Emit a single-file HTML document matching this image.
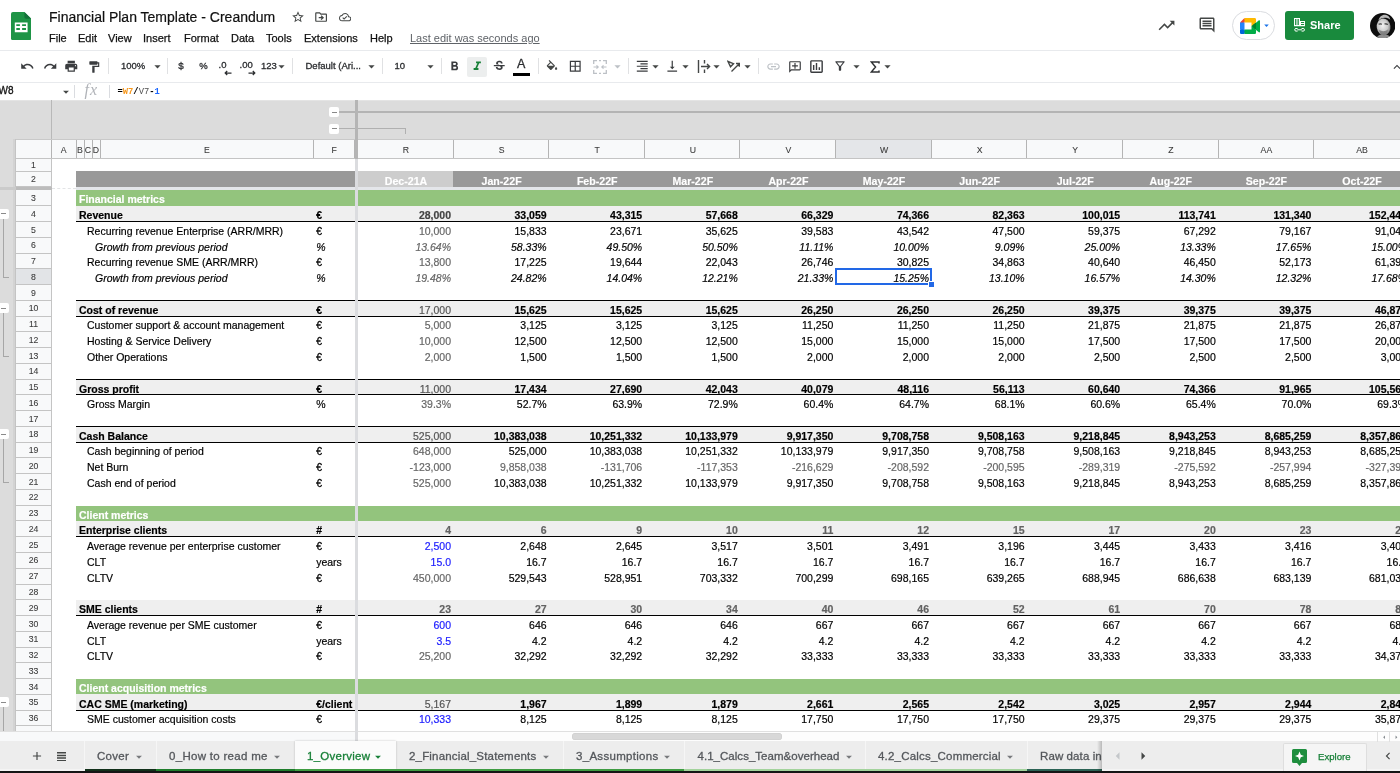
<!DOCTYPE html>
<html lang="en">
<head>
<meta charset="utf-8">
<title>Financial Plan Template - Creandum</title>
<style>
html,body{margin:0;padding:0;background:#fff;}
body{width:1400px;height:773px;overflow:hidden;font-family:"Liberation Sans",sans-serif;color:#000;}
#app{position:relative;width:1400px;height:773px;overflow:hidden;background:#fff;will-change:transform;}
#app div,#app span,#app svg{position:absolute;}
.t{white-space:pre;}
/* header */
.title{left:49px;top:9px;font-size:14px;line-height:16px;color:#111;-webkit-text-stroke:.2px #111;}
.menu{top:31px;font-size:11px;line-height:14px;color:#111;-webkit-text-stroke:.25px #111;}
.lastedit{top:31px;left:410px;font-size:11px;line-height:14px;color:#5f6368;text-decoration:underline;}
/* toolbar */
.tbtxt{top:59px;font-size:9.5px;line-height:14px;color:#2b2d30;-webkit-text-stroke:.3px #2b2d30;}
.sep{width:1px;background:#e0e1e3;top:58px;height:16px;}
.ico{fill:#444746;}
/* grid */
.hc{color:#3a3a3a;font-size:8.7px;text-align:center;-webkit-text-stroke:.08px;}
.c{font-size:10.5px;line-height:15.76px;height:15.76px;white-space:pre;overflow:visible;-webkit-text-stroke:.18px;}
.r{text-align:right;}
.b{font-weight:bold;}
.i{font-style:italic;}
.g{color:#666;}
.dg{color:#434343;}
.g2{color:#555;}
.g3{color:#626262;}
.bl{color:#1a1aff;}
.w{color:#fff;}
.eu{-webkit-text-stroke:.28px;}
.tab{top:749px;font-size:11.5px;letter-spacing:.3px;line-height:14px;color:#5f6368;white-space:pre;-webkit-text-stroke:.3px;}
</style>
</head>
<body>
<div id="app">

<!-- header -->
<svg style="left:10.900px;top:11.500px" width="20.400" height="28.200" viewBox="0 0 20.400 28.200"><path fill="#1e9446" d="M2 0h11.400l7 6.800V26.200a2 2 0 0 1-2 2H2a2 2 0 0 1-2-2V2a2 2 0 0 1 2-2z"/><path fill="#14713a" d="M13.400 0l7 6.800h-5.200a1.800 1.800 0 0 1-1.800-1.800z"/><path fill="#fff" fill-rule="evenodd" d="M3.800 10.500h12.800v9.700H3.800zM5.300 12.200v1.900h3.600v-1.900zM11.100 12.200v1.900H15v-1.900zM5.300 16.100v2h3.600v-2zM11.100 16.100v2H15v-2z"/></svg>
<div class="title t">Financial Plan Template - Creandum</div>
<svg style="left:290.7px;top:10.0px" width="14" height="14" viewBox="0 0 24 24"><path fill="#444746" d="M22 9.24l-7.19-.62L12 2 9.19 8.63 2 9.24l5.46 4.73L5.82 21 12 17.27 18.18 21l-1.63-7.03L22 9.24zM12 15.4l-3.76 2.27 1-4.28-3.32-2.88 4.38-.38L12 6.1l1.71 4.04 4.38.38-3.32 2.88 1 4.28L12 15.4z" /></svg>
<svg style="left:313.9px;top:9.9px" width="14.2" height="14.2" viewBox="0 0 24 24"><path fill="#444746" d="M20 6h-8l-2-2H4c-1.1 0-2 .9-2 2v12c0 1.1.9 2 2 2h16c1.1 0 2-.9 2-2V8c0-1.1-.9-2-2-2zm0 12H4V6h5.17l2 2H20v10zm-7.16-4H8v-2h4.84l-1.59-1.59L12.66 9 17 13l-4.34 4-1.41-1.41L12.84 14z" /></svg>
<svg style="left:338.85px;top:10.95px" width="12.3" height="12.3" viewBox="0 0 24 24"><path fill="#444746" d="M19.35 10.04C18.67 6.59 15.64 4 12 4 9.11 4 6.6 5.64 5.35 8.04 2.34 8.36 0 10.91 0 14c0 3.31 2.69 6 6 6h13c2.76 0 5-2.24 5-5 0-2.64-2.05-4.78-4.65-4.96zM19 18H6c-2.21 0-4-1.79-4-4s1.79-4 4-4h.71C7.37 7.69 9.48 6 12 6c3.04 0 5.5 2.46 5.5 5.5v.5H19c1.66 0 3 1.34 3 3s-1.34 3-3 3zm-9-3.82l-2.09-2.09L6.5 13.5 10 17l6.01-6.01-1.41-1.41z" /></svg>
<div class="menu t" style="left:49px">File</div>
<div class="menu t" style="left:78px">Edit</div>
<div class="menu t" style="left:108px">View</div>
<div class="menu t" style="left:143px">Insert</div>
<div class="menu t" style="left:184px">Format</div>
<div class="menu t" style="left:231px">Data</div>
<div class="menu t" style="left:266px">Tools</div>
<div class="menu t" style="left:304px">Extensions</div>
<div class="menu t" style="left:370px">Help</div>
<div class="lastedit t">Last edit was seconds ago</div>
<svg style="left:1156.9px;top:15.5px" width="19" height="19" viewBox="0 0 24 24"><path fill="#444746" d="M16 6l2.29 2.29-4.88 4.88-4-4L2 16.59 3.41 18l6-6 4 4 6.3-6.29L22 12V6z" /></svg>
<svg style="left:1197.6px;top:16.0px" width="18" height="18" viewBox="0 0 24 24"><path fill="#444746" d="M21.99 4c0-1.1-.89-2-1.99-2H4c-1.1 0-2 .9-2 2v12c0 1.1.9 2 2 2h14l4 4-.01-18zM20 4v13.17L18.83 16H4V4h16zM6 12h12v2H6zm0-3h12v2H6zm0-3h12v2H6z" /></svg>
<div style="left:1232px;top:11px;width:41px;height:27px;border:1px solid #dadce0;border-radius:15px;background:#fff"></div>
<svg style="left:1240px;top:17.5px" width="20" height="16" viewBox="0 0 20 16"><path fill="#00832d" d="M11.500 8l1.900 2.200 2.600 1.700.450-3.900-.450-3.800-2.650 1.500z"/><path fill="#0066da" d="M0 11.500v3.200C0 15.400.600 16 1.300 16h3.200l.700-2.400-.700-2.100-2.200-.700z"/><path fill="#e94235" d="M4.500 0L0 4.500l2.300.700 2.200-.700.650-2.100z"/><path fill="#2684fc" d="M0 4.500h4.500v7H0z"/><path fill="#00ac47" d="M18.900 2.300L16 4.700v7.200l2.900 2.400c.450.340 1.100.030 1.100-.540V2.800c0-.570-.660-.880-1.100-.500zM11.500 8v3.500h-7V16h10.200c.700 0 1.300-.600 1.300-1.300v-2.800z"/><path fill="#ffba00" d="M14.700 0H4.500v4.500h7V8L16 4.200V1.300C16 .600 15.400 0 14.700 0z"/></svg>
<svg style="left:1260.5px;top:19.5px" width="11" height="11" viewBox="0 0 24 24"><path fill="#1a73e8" d="M7 10l5 5 5-5z" /></svg>
<div style="left:1284.500px;top:11px;width:69.500px;height:28.500px;border-radius:3px;background:#198a3d"></div>
<svg style="left:1294px;top:18.200px" width="11.200" height="13.600" viewBox="0 0 11.200 13.600"><path fill="#fff" fill-rule="evenodd" d="M0 0h6v3h5.200v5.200H0zM1.100 1.100v6h1.300v-6zM3.500 1.100v6h1.300v-6zM7 4.100v1h3.100v-1zM7 6.100v1h3.100v-1z"/><path fill="none" stroke="#fff" stroke-width="1" d="M3.600 10.500H2a1.300 1.300 0 0 0 0 2.600h1.600M3.300 11.800h4.600M7.600 10.500h1.600a1.300 1.300 0 0 1 0 2.600H7.600"/></svg>
<div class="t" style="left:1310px;top:18px;font-size:11px;line-height:14px;font-weight:bold;color:#fff">Share</div>
<svg style="left:1369.500px;top:12.700px" width="25.400" height="25.400" viewBox="0 0 25.400 25.400"><defs><clipPath id="av"><circle cx="12.700" cy="12.700" r="12.700"/></clipPath><radialGradient id="fg" cx=".45" cy=".42" r=".62"><stop offset="0" stop-color="#f2f2f2"/><stop offset=".6" stop-color="#c9c9c9"/><stop offset="1" stop-color="#6e6e6e"/></radialGradient></defs><circle cx="12.700" cy="12.700" r="12.700" fill="#0d0d0d"/><g clip-path="url(#av)"><path d="M6.500 25.400c.6-2.600 3-4.200 7-4.200s6.600 1.600 7.400 4.200z" fill="#8d8d8d"/><ellipse cx="13.600" cy="13.900" rx="6.900" ry="8.400" fill="url(#fg)" transform="rotate(-8 13.600 13.900)"/><path d="M8.300 7.800c1-4 3.600-6.300 6.900-6.100 2.800.2 4.600 2.100 5.100 5-1.700-1.400-3.400-1.900-5.600-1.900-2.500 0-4.600.9-6.400 3z" fill="#b9b9b9"/><path d="M8.600 11.300c1.100-.5 2.300-.5 3.300-.1M14.500 11.100c1.100-.4 2.300-.3 3.400.3" stroke="#3a3a3a" stroke-width="1.100" fill="none"/><path d="M9 16.600c1.300 1.200 2.700 1.600 4.300 1.600s3.200-.4 4.700-1.700c-.3 3.600-2 5.800-4.400 5.800S9.500 20.200 9 16.600z" fill="#7a7a7a" opacity=".85"/></g></svg>
<!-- toolbar -->
<div style="left:0;top:49.500px;width:1400px;height:1px;background:#e8eaed"></div>
<div style="left:0;top:82px;width:1400px;height:1px;background:#e8eaed"></div>
<svg style="left:20.05px;top:59.05px" width="14.5" height="14.5" viewBox="0 0 24 24"><path fill="#3a3c3f" d="M12.5 8c-2.65 0-5.05.99-6.9 2.6L2 7v9h9l-3.62-3.62c1.39-1.16 3.16-1.88 5.12-1.88 3.54 0 6.55 2.31 7.6 5.5l2.37-.78C21.08 11.03 17.15 8 12.5 8z" /></svg>
<svg style="left:42.75px;top:59.05px" width="14.5" height="14.5" viewBox="0 0 24 24"><path fill="#3a3c3f" d="M18.4 10.6C16.55 8.99 14.15 8 11.5 8c-4.65 0-8.58 3.03-9.96 7.22L3.9 16c1.05-3.19 4.05-5.5 7.6-5.5 1.95 0 3.73.72 5.12 1.88L13 16h9V7l-3.6 3.6z" /></svg>
<svg style="left:64.45px;top:59.05px" width="14.5" height="14.5" viewBox="0 0 24 24"><path fill="#3a3c3f" d="M19 8H5c-1.66 0-3 1.34-3 3v6h4v4h12v-4h4v-6c0-1.66-1.34-3-3-3zm-3 11H8v-5h8v5zm3-7c-.55 0-1-.45-1-1s.45-1 1-1 1 .45 1 1-.45 1-1 1zm-1-9H6v4h12V3z" /></svg>
<svg style="left:87.3px;top:59.6px" width="14" height="14" viewBox="0 0 24 24"><path fill="#3a3c3f" d="M18 4V3c0-.55-.45-1-1-1H5c-.55 0-1 .45-1 1v4c0 .55.45 1 1 1h12c.55 0 1-.45 1-1V6h1v4H9v11c0 .55.45 1 1 1h2c.55 0 1-.45 1-1v-9h8V4h-3z" /></svg>
<div class="sep" style="left:108px"></div>
<div class="sep" style="left:166.5px"></div>
<div class="sep" style="left:291.5px"></div>
<div class="sep" style="left:381.5px"></div>
<div class="sep" style="left:440.5px"></div>
<div class="sep" style="left:537.5px"></div>
<div class="sep" style="left:627.5px"></div>
<div class="sep" style="left:758px"></div>
<div class="tbtxt t" style="left:121px">100%</div>
<svg style="left:149.5px;top:59.0px" width="15" height="15" viewBox="0 0 24 24"><path fill="#444746" d="M7 10l5 5 5-5z" /></svg>
<div class="tbtxt t" style="left:178.200px;font-size:9.800px">$</div>
<div class="tbtxt t" style="left:199.300px;font-size:9.500px">%</div>
<div class="tbtxt t" style="left:218.500px;top:57.500px">.0</div>
<svg style="left:223.500px;top:69.500px" width="8" height="6" viewBox="0 0 8 6"><path d="M7.500 3H1.500M3.200 1L1.200 3l2 2" fill="none" stroke="#2b2d30" stroke-width="1.250"/></svg>
<div class="tbtxt t" style="left:239.500px;top:57.500px">.00</div>
<svg style="left:247.500px;top:69.500px" width="8" height="6" viewBox="0 0 8 6"><path d="M.500 3h6M4.800 1l2 2-2 2" fill="none" stroke="#2b2d30" stroke-width="1.250"/></svg>
<div class="tbtxt t" style="left:261px">123</div>
<svg style="left:274.0px;top:59.0px" width="15" height="15" viewBox="0 0 24 24"><path fill="#444746" d="M7 10l5 5 5-5z" /></svg>
<div class="tbtxt t" style="left:305.500px">Default (Ari...</div>
<svg style="left:363.5px;top:59.0px" width="15" height="15" viewBox="0 0 24 24"><path fill="#444746" d="M7 10l5 5 5-5z" /></svg>
<div class="tbtxt t" style="left:394.500px">10</div>
<svg style="left:423.0px;top:59.0px" width="15" height="15" viewBox="0 0 24 24"><path fill="#444746" d="M7 10l5 5 5-5z" /></svg>
<svg style="left:447.0px;top:58.8px" width="15" height="15" viewBox="0 0 24 24"><path fill="#3a3c3f" d="M15.6 10.79c.97-.67 1.65-1.77 1.65-2.79 0-2.26-1.75-4-4-4H7v14h7.04c2.09 0 3.71-1.7 3.71-3.79 0-1.52-.86-2.82-2.15-3.42zM10 6.5h3c.83 0 1.5.67 1.5 1.5s-.67 1.5-1.5 1.5h-3v-3zm3.5 9H10v-3h3.5c.83 0 1.5.67 1.5 1.5s-.67 1.5-1.5 1.5z" /></svg>
<div style="left:467px;top:57px;width:19.500px;height:19.500px;background:#eceeee;border-radius:2px"></div>
<svg style="left:469.55px;top:59.05px" width="14.5" height="14.5" viewBox="0 0 24 24"><path fill="#188038" d="M10 4v3h2.21l-3.42 8H6v3h8v-3h-2.21l3.42-8H18V4z" /></svg>
<svg style="left:491.75px;top:59.05px" width="14.5" height="14.5" viewBox="0 0 24 24"><path fill="#3a3c3f" d="M7.24 8.75c-.26-.48-.39-1.03-.39-1.67 0-.61.13-1.16.4-1.67.26-.5.63-.93 1.11-1.29.48-.35 1.05-.63 1.7-.83.66-.19 1.39-.29 2.18-.29.81 0 1.54.11 2.21.34.66.22 1.23.54 1.69.94.47.4.83.88 1.08 1.43.25.55.38 1.15.38 1.81h-3.01c0-.31-.05-.59-.15-.85-.09-.27-.24-.49-.44-.68-.2-.19-.45-.33-.75-.44-.3-.1-.66-.16-1.06-.16-.39 0-.74.04-1.03.13-.29.09-.53.21-.72.36-.19.16-.34.34-.44.55-.1.21-.15.43-.15.66 0 .48.25.88.74 1.21.38.25.77.48 1.41.7H7.39c-.05-.08-.11-.17-.15-.25zM21 12v-2H3v2h9.62c.18.07.4.14.55.2.37.17.66.34.87.51.21.17.35.36.43.57.07.2.11.43.11.69 0 .23-.05.45-.14.66-.09.2-.23.38-.42.53-.19.15-.42.26-.71.35-.29.08-.63.13-1.01.13-.43 0-.83-.04-1.18-.13s-.66-.23-.91-.42c-.25-.19-.45-.44-.59-.75-.14-.31-.25-.76-.25-1.21H6.4c0 .55.08 1.13.24 1.58.16.45.37.85.65 1.21.28.35.6.66.98.92.37.26.78.48 1.22.65.44.17.9.3 1.38.39.48.08.96.13 1.44.13.8 0 1.53-.09 2.18-.28s1.21-.45 1.67-.79c.46-.34.82-.77 1.07-1.27s.38-1.07.38-1.71c0-.6-.1-1.14-.31-1.61-.05-.11-.11-.23-.17-.33H21z" /></svg>
<div class="t" style="left:517px;top:57.300px;font-size:12.500px;line-height:15px;color:#2b2d30;-webkit-text-stroke:.3px #2b2d30">A</div>
<div style="left:513.200px;top:73px;width:17px;height:2.600px;background:#000"></div>
<svg style="left:544.5px;top:59.8px" width="14" height="14" viewBox="0 0 24 24"><path fill="#444746" d="M16.56 8.94L7.62 0 6.21 1.41l2.38 2.38-5.15 5.15c-.59.59-.59 1.54 0 2.12l5.5 5.5c.29.29.68.44 1.06.44s.77-.15 1.06-.44l5.5-5.5c.59-.58.59-1.53 0-2.12zM5.21 10L10 5.21 14.79 10H5.21zM19 11.5s-2 2.17-2 3.5c0 1.1.9 2 2 2s2-.9 2-2c0-1.33-2-3.5-2-3.5z" /></svg>
<svg style="left:567.95px;top:59.05px" width="14.5" height="14.5" viewBox="0 0 24 24"><path fill="#3a3c3f" d="M3 3v18h18V3H3zm8 16H5v-6h6v6zm0-8H5V5h6v6zm8 8h-6v-6h6v6zm0-8h-6V5h6v6z" /></svg>
<svg style="left:593px;top:59.500px" width="14" height="14" viewBox="0 0 14 14"><path fill="none" stroke="#bdc1c6" stroke-width="1.300" d="M.700 4V.700H4M6 .700h2M10 .700h3.300V4M13.300 10v3.300H10M8 13.300H6M4 13.300H.700V10"/><path fill="none" stroke="#bdc1c6" stroke-width="1.200" d="M.500 7h4.500M3.500 5.300L5.200 7 3.500 8.700M13.500 7H9M10.500 5.300L8.800 7l1.700 1.700"/></svg>
<svg style="left:609.5px;top:59.0px" width="15" height="15" viewBox="0 0 24 24"><path fill="#bdc1c6" d="M7 10l5 5 5-5z" /></svg>
<svg style="left:634.75px;top:59.05px" width="14.5" height="14.5" viewBox="0 0 24 24"><path fill="#3a3c3f" d="M3 21h18v-2H3v2zm6-4h12v-2H9v2zm-6-4h18v-2H3v2zm6-4h12V7H9v2zM3 3v2h18V3H3z" /></svg>
<svg style="left:647.5px;top:59.0px" width="15" height="15" viewBox="0 0 24 24"><path fill="#444746" d="M7 10l5 5 5-5z" /></svg>
<svg style="left:665.25px;top:59.05px" width="14.5" height="14.5" viewBox="0 0 24 24"><path fill="#3a3c3f" d="M16 13h-3V3h-2v10H8l4 4 4-4zM4 19v2h16v-2H4z" /></svg>
<svg style="left:678.2px;top:59.0px" width="15" height="15" viewBox="0 0 24 24"><path fill="#444746" d="M7 10l5 5 5-5z" /></svg>
<svg style="left:696.500px;top:59px" width="14" height="15" viewBox="0 0 14 15"><path fill="none" stroke="#444746" stroke-width="1.400" d="M1.500 1v13M7.500 1v3.500M7.500 10.500V14M4 7.500h8M10 5l2.600 2.500L10 10"/></svg>
<svg style="left:708.5px;top:59.0px" width="15" height="15" viewBox="0 0 24 24"><path fill="#444746" d="M7 10l5 5 5-5z" /></svg>
<svg style="left:727px;top:59px" width="14" height="15" viewBox="0 0 14 15"><path fill="none" stroke="#444746" stroke-width="1.400" d="M1 2.500l5.500 2.200-3 3zM4.500 12.500L12 5M9 4.500h3.300v3.300"/></svg>
<svg style="left:740.0px;top:59.0px" width="15" height="15" viewBox="0 0 24 24"><path fill="#444746" d="M7 10l5 5 5-5z" /></svg>
<svg style="left:765.5px;top:58.8px" width="15" height="15" viewBox="0 0 24 24"><path fill="#bdc1c6" d="M3.9 12c0-1.71 1.39-3.1 3.1-3.1h4V7H7c-2.76 0-5 2.24-5 5s2.24 5 5 5h4v-1.9H7c-1.71 0-3.1-1.39-3.1-3.1zM8 13h8v-2H8v2zm9-6h-4v1.9h4c1.71 0 3.1 1.39 3.1 3.1s-1.39 3.1-3.1 3.1h-4V17h4c2.76 0 5-2.24 5-5s-2.24-5-5-5z" /></svg>
<svg style="left:787.6px;top:59.7px" width="14" height="14" viewBox="0 0 24 24"><path fill="#3a3c3f" d="M2 4c0-1.1.9-2 2-2h16c1.1 0 2 .9 2 2v12c0 1.1-.9 2-2 2H6l-4 4V4zm2 13.17L5.17 16H20V4H4v13.17zM11 5h2v4h4v2h-4v4h-2v-4H7V9h4z" /></svg>
<svg style="left:808.3px;top:58.0px" width="17" height="17" viewBox="0 0 24 24"><path fill="#3a3c3f" d="M9 17H7v-7h2v7zm4 0h-2V7h2v10zm4 0h-2v-4h2v4zm2 2H5V5h14v14zm0-16H5c-1.1 0-2 .9-2 2v14c0 1.1.9 2 2 2h14c1.1 0 2-.9 2-2V5c0-1.1-.9-2-2-2z" /></svg>
<svg style="left:832.5px;top:59.3px" width="14" height="14" viewBox="0 0 24 24"><path fill="#3a3c3f" d="M7 6h10l-5.01 6.3L7 6zm-2.75-.39C6.27 8.2 10 13 10 13v6c0 .55.45 1 1 1h2c.55 0 1-.45 1-1v-6s3.72-4.8 5.74-7.39c.51-.66.04-1.61-.79-1.61H5.04c-.83 0-1.3.95-.79 1.61z" /></svg>
<svg style="left:849.2px;top:59.0px" width="15" height="15" viewBox="0 0 24 24"><path fill="#444746" d="M7 10l5 5 5-5z" /></svg>
<svg style="left:869.500px;top:60.500px" width="10" height="12" viewBox="0 0 10 12"><path fill="none" stroke="#2f3133" stroke-width="1.500" d="M9 2.600V1H1.300l4.200 5-4.200 5H9V9.400"/></svg>
<svg style="left:880.0px;top:59.0px" width="15" height="15" viewBox="0 0 24 24"><path fill="#444746" d="M7 10l5 5 5-5z" /></svg>
<svg style="left:1389.8px;top:60.0px" width="14" height="14" viewBox="0 0 24 24"><path fill="#3a3c3f" d="M12 8l-6 6 1.41 1.41L12 10.83l4.59 4.58L18 14z" /></svg>
<!-- formula bar -->
<div class="t" style="left:-1.500px;top:84px;font-size:10px;line-height:14px;color:#111;-webkit-text-stroke:.3px #111">W8</div>
<svg style="left:59.0px;top:85.0px" width="14" height="14" viewBox="0 0 24 24"><path fill="#444746" d="M7 10l5 5 5-5z" /></svg>
<div style="left:74px;top:85px;width:1px;height:13px;background:#dadce0"></div>
<div class="t" style="left:84.500px;top:82.100px;font-family:'Liberation Serif',serif;font-style:italic;font-size:16px;letter-spacing:1px;line-height:16px;color:#b0b3b8">fx</div>
<div style="left:108.500px;top:85px;width:1px;height:13px;background:#dadce0"></div>
<div class="t" style="left:117.500px;top:86.400px;font-family:'Liberation Mono',monospace;font-size:8.800px;font-weight:bold;line-height:13px;color:#000">=<span style="position:static;color:#f7981d">W7</span>/<span style="position:static;color:#505050;font-weight:normal">V7</span>-<span style="position:static;color:#1a66ff">1</span></div>
<!-- grid -->
<div style="left:0;top:100.300px;width:1400px;height:39.400px;background:#dcdcdc"></div>
<div style="left:0;top:100.300px;width:15.500px;height:631.1px;background:#dcdcdc"></div>
<div style="left:0;top:100px;width:1400px;height:1px;background:#e4e4e4"></div>
<div style="left:51px;top:100.300px;width:1px;height:39.400px;background:#b8b8b8"></div>
<div style="left:339px;top:111.300px;width:1061px;height:1.600px;background:#b4b4b4"></div>
<div style="left:339px;top:128px;width:67px;height:1px;background:#b0b0b0"></div>
<div style="left:405px;top:128px;width:1px;height:6px;background:#b0b0b0"></div>
<div style="left:329px;top:107.2px;width:10px;height:10px;background:#fff;border-radius:2px"></div>
<div style="left:331.500px;top:111.7px;width:5px;height:1px;background:#888"></div>
<div style="left:329px;top:123.8px;width:10px;height:10px;background:#fff;border-radius:2px"></div>
<div style="left:331.500px;top:128.3px;width:5px;height:1px;background:#888"></div>
<div style="left:15.500px;top:139.500px;width:1385px;height:19.200px;background:#f8f9fa"></div>
<div style="left:15.500px;top:139px;width:1385px;height:1px;background:#c9c9c9"></div>
<div style="left:15.500px;top:158px;width:1385px;height:1px;background:#c4c4c4"></div>
<div style="left:15px;top:139px;width:1px;height:20px;background:#c4c4c4"></div>
<div style="left:51px;top:140px;width:1px;height:18px;background:#b4b4b4"></div>
<div style="left:76px;top:140px;width:1px;height:18px;background:#b4b4b4"></div>
<div class="hc" style="left:51.50px;top:141.300px;width:24.50px;height:17px;line-height:19px">A</div>
<div style="left:84px;top:140px;width:1px;height:18px;background:#b4b4b4"></div>
<div class="hc" style="left:76.00px;top:141.300px;width:8.00px;height:17px;line-height:19px">B</div>
<div style="left:92px;top:140px;width:1px;height:18px;background:#b4b4b4"></div>
<div class="hc" style="left:84.00px;top:141.300px;width:8.00px;height:17px;line-height:19px">C</div>
<div style="left:100px;top:140px;width:1px;height:18px;background:#b4b4b4"></div>
<div class="hc" style="left:92.00px;top:141.300px;width:8.00px;height:17px;line-height:19px">D</div>
<div style="left:313px;top:140px;width:1px;height:18px;background:#b4b4b4"></div>
<div class="hc" style="left:100.00px;top:141.300px;width:213.70px;height:17px;line-height:19px">E</div>
<div style="left:354px;top:140px;width:1px;height:18px;background:#b4b4b4"></div>
<div class="hc" style="left:313.70px;top:141.300px;width:41.00px;height:17px;line-height:19px">F</div>
<div style="left:453px;top:140px;width:1px;height:18px;background:#b4b4b4"></div>
<div class="hc" style="left:358.20px;top:141.300px;width:95.60px;height:17px;line-height:19px">R</div>
<div style="left:548px;top:140px;width:1px;height:18px;background:#b4b4b4"></div>
<div class="hc" style="left:453.80px;top:141.300px;width:95.60px;height:17px;line-height:19px">S</div>
<div style="left:644px;top:140px;width:1px;height:18px;background:#b4b4b4"></div>
<div class="hc" style="left:549.40px;top:141.300px;width:95.60px;height:17px;line-height:19px">T</div>
<div style="left:739px;top:140px;width:1px;height:18px;background:#b4b4b4"></div>
<div class="hc" style="left:645.00px;top:141.300px;width:95.60px;height:17px;line-height:19px">U</div>
<div style="left:835px;top:140px;width:1px;height:18px;background:#b4b4b4"></div>
<div class="hc" style="left:740.60px;top:141.300px;width:95.60px;height:17px;line-height:19px">V</div>
<div style="left:836.20px;top:140px;width:95.60px;height:18px;background:#e4e6e9"></div>
<div style="left:835px;top:140px;width:1px;height:18px;background:#b4b4b4"></div>
<div style="left:931px;top:140px;width:1px;height:18px;background:#b4b4b4"></div>
<div class="hc" style="left:836.20px;top:141.300px;width:95.60px;height:17px;line-height:19px">W</div>
<div style="left:1026px;top:140px;width:1px;height:18px;background:#b4b4b4"></div>
<div class="hc" style="left:931.80px;top:141.300px;width:95.60px;height:17px;line-height:19px">X</div>
<div style="left:1122px;top:140px;width:1px;height:18px;background:#b4b4b4"></div>
<div class="hc" style="left:1027.40px;top:141.300px;width:95.60px;height:17px;line-height:19px">Y</div>
<div style="left:1218px;top:140px;width:1px;height:18px;background:#b4b4b4"></div>
<div class="hc" style="left:1123.00px;top:141.300px;width:95.60px;height:17px;line-height:19px">Z</div>
<div style="left:1313px;top:140px;width:1px;height:18px;background:#b4b4b4"></div>
<div class="hc" style="left:1218.60px;top:141.300px;width:95.60px;height:17px;line-height:19px">AA</div>
<div style="left:1409px;top:140px;width:1px;height:18px;background:#b4b4b4"></div>
<div class="hc" style="left:1314.20px;top:141.300px;width:95.60px;height:17px;line-height:19px">AB</div>
<div style="left:15.500px;top:158.700px;width:36px;height:572.7px;background:#f8f9fa"></div>
<div style="left:13px;top:139px;width:2px;height:592.4px;background:#d3d3d3"></div>
<div style="left:15px;top:158.700px;width:1px;height:572.7px;background:#c4c4c4"></div>
<div style="left:51px;top:158.700px;width:1px;height:572.7px;background:#c4c4c4"></div>
<div style="left:16px;top:171px;width:35px;height:1px;background:#c4c4c4"></div>
<div class="hc" style="left:16px;top:158.70px;width:35px;height:12.40px;line-height:13.00px;overflow:hidden">1</div>
<div style="left:16px;top:186px;width:35px;height:1px;background:#c4c4c4"></div>
<div class="hc" style="left:16px;top:171.10px;width:35px;height:15.50px;line-height:16.10px;overflow:hidden">2</div>
<div style="left:16px;top:205px;width:35px;height:1px;background:#c4c4c4"></div>
<div class="hc" style="left:16px;top:190.00px;width:35px;height:15.76px;line-height:16.36px;overflow:hidden">3</div>
<div style="left:16px;top:221px;width:35px;height:1px;background:#c4c4c4"></div>
<div class="hc" style="left:16px;top:205.76px;width:35px;height:15.76px;line-height:16.36px;overflow:hidden">4</div>
<div style="left:16px;top:237px;width:35px;height:1px;background:#c4c4c4"></div>
<div class="hc" style="left:16px;top:221.52px;width:35px;height:15.76px;line-height:16.36px;overflow:hidden">5</div>
<div style="left:16px;top:253px;width:35px;height:1px;background:#c4c4c4"></div>
<div class="hc" style="left:16px;top:237.28px;width:35px;height:15.76px;line-height:16.36px;overflow:hidden">6</div>
<div style="left:16px;top:268px;width:35px;height:1px;background:#c4c4c4"></div>
<div class="hc" style="left:16px;top:253.04px;width:35px;height:15.76px;line-height:16.36px;overflow:hidden">7</div>
<div style="left:16px;top:268.80px;width:35px;height:15.76px;background:#e2e4e7"></div>
<div style="left:16px;top:284px;width:35px;height:1px;background:#c4c4c4"></div>
<div class="hc" style="left:16px;top:268.80px;width:35px;height:15.76px;line-height:16.36px;overflow:hidden">8</div>
<div style="left:16px;top:300px;width:35px;height:1px;background:#c4c4c4"></div>
<div class="hc" style="left:16px;top:284.56px;width:35px;height:15.76px;line-height:16.36px;overflow:hidden">9</div>
<div style="left:16px;top:316px;width:35px;height:1px;background:#c4c4c4"></div>
<div class="hc" style="left:16px;top:300.32px;width:35px;height:15.76px;line-height:16.36px;overflow:hidden">10</div>
<div style="left:16px;top:331px;width:35px;height:1px;background:#c4c4c4"></div>
<div class="hc" style="left:16px;top:316.08px;width:35px;height:15.76px;line-height:16.36px;overflow:hidden">11</div>
<div style="left:16px;top:347px;width:35px;height:1px;background:#c4c4c4"></div>
<div class="hc" style="left:16px;top:331.84px;width:35px;height:15.76px;line-height:16.36px;overflow:hidden">12</div>
<div style="left:16px;top:363px;width:35px;height:1px;background:#c4c4c4"></div>
<div class="hc" style="left:16px;top:347.60px;width:35px;height:15.76px;line-height:16.36px;overflow:hidden">13</div>
<div style="left:16px;top:379px;width:35px;height:1px;background:#c4c4c4"></div>
<div class="hc" style="left:16px;top:363.36px;width:35px;height:15.76px;line-height:16.36px;overflow:hidden">14</div>
<div style="left:16px;top:394px;width:35px;height:1px;background:#c4c4c4"></div>
<div class="hc" style="left:16px;top:379.12px;width:35px;height:15.76px;line-height:16.36px;overflow:hidden">15</div>
<div style="left:16px;top:410px;width:35px;height:1px;background:#c4c4c4"></div>
<div class="hc" style="left:16px;top:394.88px;width:35px;height:15.76px;line-height:16.36px;overflow:hidden">16</div>
<div style="left:16px;top:426px;width:35px;height:1px;background:#c4c4c4"></div>
<div class="hc" style="left:16px;top:410.64px;width:35px;height:15.76px;line-height:16.36px;overflow:hidden">17</div>
<div style="left:16px;top:442px;width:35px;height:1px;background:#c4c4c4"></div>
<div class="hc" style="left:16px;top:426.40px;width:35px;height:15.76px;line-height:16.36px;overflow:hidden">18</div>
<div style="left:16px;top:457px;width:35px;height:1px;background:#c4c4c4"></div>
<div class="hc" style="left:16px;top:442.16px;width:35px;height:15.76px;line-height:16.36px;overflow:hidden">19</div>
<div style="left:16px;top:473px;width:35px;height:1px;background:#c4c4c4"></div>
<div class="hc" style="left:16px;top:457.92px;width:35px;height:15.76px;line-height:16.36px;overflow:hidden">20</div>
<div style="left:16px;top:489px;width:35px;height:1px;background:#c4c4c4"></div>
<div class="hc" style="left:16px;top:473.68px;width:35px;height:15.76px;line-height:16.36px;overflow:hidden">21</div>
<div style="left:16px;top:505px;width:35px;height:1px;background:#c4c4c4"></div>
<div class="hc" style="left:16px;top:489.44px;width:35px;height:15.76px;line-height:16.36px;overflow:hidden">22</div>
<div style="left:16px;top:520px;width:35px;height:1px;background:#c4c4c4"></div>
<div class="hc" style="left:16px;top:505.20px;width:35px;height:15.76px;line-height:16.36px;overflow:hidden">23</div>
<div style="left:16px;top:536px;width:35px;height:1px;background:#c4c4c4"></div>
<div class="hc" style="left:16px;top:520.96px;width:35px;height:15.76px;line-height:16.36px;overflow:hidden">24</div>
<div style="left:16px;top:552px;width:35px;height:1px;background:#c4c4c4"></div>
<div class="hc" style="left:16px;top:536.72px;width:35px;height:15.76px;line-height:16.36px;overflow:hidden">25</div>
<div style="left:16px;top:568px;width:35px;height:1px;background:#c4c4c4"></div>
<div class="hc" style="left:16px;top:552.48px;width:35px;height:15.76px;line-height:16.36px;overflow:hidden">26</div>
<div style="left:16px;top:584px;width:35px;height:1px;background:#c4c4c4"></div>
<div class="hc" style="left:16px;top:568.24px;width:35px;height:15.76px;line-height:16.36px;overflow:hidden">27</div>
<div style="left:16px;top:599px;width:35px;height:1px;background:#c4c4c4"></div>
<div class="hc" style="left:16px;top:584.00px;width:35px;height:15.76px;line-height:16.36px;overflow:hidden">28</div>
<div style="left:16px;top:615px;width:35px;height:1px;background:#c4c4c4"></div>
<div class="hc" style="left:16px;top:599.76px;width:35px;height:15.76px;line-height:16.36px;overflow:hidden">29</div>
<div style="left:16px;top:631px;width:35px;height:1px;background:#c4c4c4"></div>
<div class="hc" style="left:16px;top:615.52px;width:35px;height:15.76px;line-height:16.36px;overflow:hidden">30</div>
<div style="left:16px;top:647px;width:35px;height:1px;background:#c4c4c4"></div>
<div class="hc" style="left:16px;top:631.28px;width:35px;height:15.76px;line-height:16.36px;overflow:hidden">31</div>
<div style="left:16px;top:662px;width:35px;height:1px;background:#c4c4c4"></div>
<div class="hc" style="left:16px;top:647.04px;width:35px;height:15.76px;line-height:16.36px;overflow:hidden">32</div>
<div style="left:16px;top:678px;width:35px;height:1px;background:#c4c4c4"></div>
<div class="hc" style="left:16px;top:662.80px;width:35px;height:15.76px;line-height:16.36px;overflow:hidden">33</div>
<div style="left:16px;top:694px;width:35px;height:1px;background:#c4c4c4"></div>
<div class="hc" style="left:16px;top:678.56px;width:35px;height:15.76px;line-height:16.36px;overflow:hidden">34</div>
<div style="left:16px;top:710px;width:35px;height:1px;background:#c4c4c4"></div>
<div class="hc" style="left:16px;top:694.32px;width:35px;height:15.76px;line-height:16.36px;overflow:hidden">35</div>
<div style="left:16px;top:725px;width:35px;height:1px;background:#c4c4c4"></div>
<div class="hc" style="left:16px;top:710.08px;width:35px;height:15.76px;line-height:16.36px;overflow:hidden">36</div>
<div class="hc" style="left:16px;top:725.84px;width:35px;height:5.56px;line-height:16.36px;overflow:hidden">37</div>
<div style="left:0;top:186.600px;width:15.500px;height:3.400px;background:#cbcbcb"></div>
<div style="left:15.500px;top:186.600px;width:36px;height:3.400px;background:#bcbcbc"></div>
<div style="left:76px;top:186.800px;width:1324px;height:3.400px;background:#e4e6ea"></div>
<div style="left:52px;top:188px;width:24px;height:0;border-top:1px dashed #e3e4e6"></div>
<div style="left:354.900px;top:158.700px;width:3.300px;height:572.7px;background:#dbdcdf"></div>
<div style="left:354.900px;top:100.300px;width:3.300px;height:58.400px;background:#b5b5b5"></div>
<div style="left:3px;top:213.66px;width:1px;height:64.04px;background:#a6a6a6"></div>
<div style="left:3px;top:276.70px;width:6px;height:1px;background:#a6a6a6"></div>
<div style="left:-2px;top:208.76px;width:10.700px;height:9.800px;background:#fff;border-radius:2px"></div>
<div style="left:1px;top:213.26px;width:5px;height:1px;background:#8a8a8a"></div>
<div style="left:3px;top:308.22px;width:1px;height:48.28px;background:#a6a6a6"></div>
<div style="left:3px;top:355.50px;width:6px;height:1px;background:#a6a6a6"></div>
<div style="left:-2px;top:303.32px;width:10.700px;height:9.800px;background:#fff;border-radius:2px"></div>
<div style="left:1px;top:307.82px;width:5px;height:1px;background:#8a8a8a"></div>
<div style="left:3px;top:434.30px;width:1px;height:48.28px;background:#a6a6a6"></div>
<div style="left:3px;top:481.58px;width:6px;height:1px;background:#a6a6a6"></div>
<div style="left:-2px;top:429.40px;width:10.700px;height:9.800px;background:#fff;border-radius:2px"></div>
<div style="left:1px;top:433.90px;width:5px;height:1px;background:#8a8a8a"></div>
<div style="left:3px;top:702.22px;width:1px;height:48.28px;background:#a6a6a6"></div>
<div style="left:3px;top:749.50px;width:6px;height:1px;background:#a6a6a6"></div>
<div style="left:-2px;top:697.32px;width:10.700px;height:9.800px;background:#fff;border-radius:2px"></div>
<div style="left:1px;top:701.82px;width:5px;height:1px;background:#8a8a8a"></div>
<div style="left:76.00px;top:170.70px;width:278.90px;height:15.90px;background:#999"></div>
<div style="left:358.20px;top:170.70px;width:94.60px;height:15.90px;background:#cdcdcd"></div>
<div style="left:452.80px;top:170.70px;width:947.20px;height:15.90px;background:#999"></div>
<div style="left:76.00px;top:190.30px;width:278.90px;height:15.56px;background:#93c47d"></div>
<div style="left:358.20px;top:190.30px;width:1041.80px;height:15.56px;background:#93c47d"></div>
<div style="left:76.00px;top:505.50px;width:278.90px;height:15.56px;background:#93c47d"></div>
<div style="left:358.20px;top:505.50px;width:1041.80px;height:15.56px;background:#93c47d"></div>
<div style="left:76.00px;top:678.86px;width:278.90px;height:15.56px;background:#93c47d"></div>
<div style="left:358.20px;top:678.86px;width:1041.80px;height:15.56px;background:#93c47d"></div>
<div style="left:76.00px;top:205.76px;width:278.90px;height:15.76px;background:#efefef"></div>
<div style="left:358.20px;top:205.76px;width:1041.80px;height:15.76px;background:#efefef"></div>
<div style="left:76.00px;top:300.32px;width:278.90px;height:15.76px;background:#efefef"></div>
<div style="left:358.20px;top:300.32px;width:1041.80px;height:15.76px;background:#efefef"></div>
<div style="left:76.00px;top:379.12px;width:278.90px;height:15.76px;background:#efefef"></div>
<div style="left:358.20px;top:379.12px;width:1041.80px;height:15.76px;background:#efefef"></div>
<div style="left:76.00px;top:426.40px;width:278.90px;height:15.76px;background:#efefef"></div>
<div style="left:358.20px;top:426.40px;width:1041.80px;height:15.76px;background:#efefef"></div>
<div style="left:76.00px;top:520.96px;width:278.90px;height:15.76px;background:#efefef"></div>
<div style="left:358.20px;top:520.96px;width:1041.80px;height:15.76px;background:#efefef"></div>
<div style="left:76.00px;top:599.76px;width:278.90px;height:15.76px;background:#efefef"></div>
<div style="left:358.20px;top:599.76px;width:1041.80px;height:15.76px;background:#efefef"></div>
<div style="left:76.00px;top:694.32px;width:278.90px;height:15.76px;background:#efefef"></div>
<div style="left:358.20px;top:694.32px;width:1041.80px;height:15.76px;background:#efefef"></div>
<div style="left:76px;top:221px;width:278.900px;height:1px;background:#000"></div>
<div style="left:358.2px;top:221px;width:1041.8px;height:1px;background:#000"></div>
<div style="left:76px;top:316px;width:278.900px;height:1px;background:#000"></div>
<div style="left:358.2px;top:316px;width:1041.8px;height:1px;background:#000"></div>
<div style="left:76px;top:394px;width:278.900px;height:1px;background:#000"></div>
<div style="left:358.2px;top:394px;width:1041.8px;height:1px;background:#000"></div>
<div style="left:76px;top:442px;width:278.900px;height:1px;background:#000"></div>
<div style="left:358.2px;top:442px;width:1041.8px;height:1px;background:#000"></div>
<div style="left:76px;top:536px;width:278.900px;height:1px;background:#000"></div>
<div style="left:358.2px;top:536px;width:1041.8px;height:1px;background:#000"></div>
<div style="left:76px;top:615px;width:278.900px;height:1px;background:#000"></div>
<div style="left:358.2px;top:615px;width:1041.8px;height:1px;background:#000"></div>
<div style="left:76px;top:710px;width:278.900px;height:1px;background:#000"></div>
<div style="left:358.2px;top:710px;width:1041.8px;height:1px;background:#000"></div>
<div style="left:76px;top:300px;width:278.900px;height:1px;background:#000"></div>
<div style="left:358.2px;top:300px;width:1041.8px;height:1px;background:#000"></div>
<div style="left:76px;top:379px;width:278.900px;height:1px;background:#000"></div>
<div style="left:358.2px;top:379px;width:1041.8px;height:1px;background:#000"></div>
<div style="left:76px;top:426px;width:278.900px;height:1px;background:#000"></div>
<div style="left:358.2px;top:426px;width:1041.8px;height:1px;background:#000"></div>
<div class="c b w" style="left:358.20px;width:95.6px;text-align:center;top:174.400px;font-size:10.600px;line-height:14px;height:12.200px;overflow:hidden">Dec-21A</div>
<div class="c b w" style="left:453.80px;width:95.6px;text-align:center;top:174.400px;font-size:10.600px;line-height:14px;height:12.200px;overflow:hidden">Jan-22F</div>
<div class="c b w" style="left:549.40px;width:95.6px;text-align:center;top:174.400px;font-size:10.600px;line-height:14px;height:12.200px;overflow:hidden">Feb-22F</div>
<div class="c b w" style="left:645.00px;width:95.6px;text-align:center;top:174.400px;font-size:10.600px;line-height:14px;height:12.200px;overflow:hidden">Mar-22F</div>
<div class="c b w" style="left:740.60px;width:95.6px;text-align:center;top:174.400px;font-size:10.600px;line-height:14px;height:12.200px;overflow:hidden">Apr-22F</div>
<div class="c b w" style="left:836.20px;width:95.6px;text-align:center;top:174.400px;font-size:10.600px;line-height:14px;height:12.200px;overflow:hidden">May-22F</div>
<div class="c b w" style="left:931.80px;width:95.6px;text-align:center;top:174.400px;font-size:10.600px;line-height:14px;height:12.200px;overflow:hidden">Jun-22F</div>
<div class="c b w" style="left:1027.40px;width:95.6px;text-align:center;top:174.400px;font-size:10.600px;line-height:14px;height:12.200px;overflow:hidden">Jul-22F</div>
<div class="c b w" style="left:1123.00px;width:95.6px;text-align:center;top:174.400px;font-size:10.600px;line-height:14px;height:12.200px;overflow:hidden">Aug-22F</div>
<div class="c b w" style="left:1218.60px;width:95.6px;text-align:center;top:174.400px;font-size:10.600px;line-height:14px;height:12.200px;overflow:hidden">Sep-22F</div>
<div class="c b w" style="left:1314.20px;width:95.6px;text-align:center;top:174.400px;font-size:10.600px;line-height:14px;height:12.200px;overflow:hidden">Oct-22F</div>
<div class="c b w" style="left:79.00px;top:192.30px">Financial metrics</div>
<div class="c b" style="left:79.00px;top:208.06px">Revenue</div>
<div class="c b" style="left:316.20px;top:208.06px">€</div>
<div class="c r b dg" style="left:361.00px;width:90px;top:208.06px">28,000</div>
<div class="c r b" style="left:456.60px;width:90px;top:208.06px">33,059</div>
<div class="c r b" style="left:552.20px;width:90px;top:208.06px">43,315</div>
<div class="c r b" style="left:647.80px;width:90px;top:208.06px">57,668</div>
<div class="c r b" style="left:743.40px;width:90px;top:208.06px">66,329</div>
<div class="c r b" style="left:839.00px;width:90px;top:208.06px">74,366</div>
<div class="c r b" style="left:934.60px;width:90px;top:208.06px">82,363</div>
<div class="c r b" style="left:1030.20px;width:90px;top:208.06px">100,015</div>
<div class="c r b" style="left:1125.80px;width:90px;top:208.06px">113,741</div>
<div class="c r b" style="left:1221.40px;width:90px;top:208.06px">131,340</div>
<div class="c r b" style="left:1317.00px;width:90px;top:208.06px">152,440</div>
<div class="c " style="left:87.00px;top:223.82px">Recurring revenue Enterprise (ARR/MRR)</div>
<div class="c eu" style="left:316.20px;top:223.82px">€</div>
<div class="c r g" style="left:361.00px;width:90px;top:223.82px">10,000</div>
<div class="c r " style="left:456.60px;width:90px;top:223.82px">15,833</div>
<div class="c r " style="left:552.20px;width:90px;top:223.82px">23,671</div>
<div class="c r " style="left:647.80px;width:90px;top:223.82px">35,625</div>
<div class="c r " style="left:743.40px;width:90px;top:223.82px">39,583</div>
<div class="c r " style="left:839.00px;width:90px;top:223.82px">43,542</div>
<div class="c r " style="left:934.60px;width:90px;top:223.82px">47,500</div>
<div class="c r " style="left:1030.20px;width:90px;top:223.82px">59,375</div>
<div class="c r " style="left:1125.80px;width:90px;top:223.82px">67,292</div>
<div class="c r " style="left:1221.40px;width:90px;top:223.82px">79,167</div>
<div class="c r " style="left:1317.00px;width:90px;top:223.82px">91,042</div>
<div class="c i" style="left:95.00px;top:239.58px">Growth from previous period</div>
<div class="c i" style="left:316.20px;top:239.58px">%</div>
<div class="c r i g" style="left:361.00px;width:90px;top:239.58px">13.64%</div>
<div class="c r i" style="left:456.60px;width:90px;top:239.58px">58.33%</div>
<div class="c r i" style="left:552.20px;width:90px;top:239.58px">49.50%</div>
<div class="c r i" style="left:647.80px;width:90px;top:239.58px">50.50%</div>
<div class="c r i" style="left:743.40px;width:90px;top:239.58px">11.11%</div>
<div class="c r i" style="left:839.00px;width:90px;top:239.58px">10.00%</div>
<div class="c r i" style="left:934.60px;width:90px;top:239.58px">9.09%</div>
<div class="c r i" style="left:1030.20px;width:90px;top:239.58px">25.00%</div>
<div class="c r i" style="left:1125.80px;width:90px;top:239.58px">13.33%</div>
<div class="c r i" style="left:1221.40px;width:90px;top:239.58px">17.65%</div>
<div class="c r i" style="left:1317.00px;width:90px;top:239.58px">15.00%</div>
<div class="c " style="left:87.00px;top:255.34px">Recurring revenue SME (ARR/MRR)</div>
<div class="c eu" style="left:316.20px;top:255.34px">€</div>
<div class="c r g" style="left:361.00px;width:90px;top:255.34px">13,800</div>
<div class="c r " style="left:456.60px;width:90px;top:255.34px">17,225</div>
<div class="c r " style="left:552.20px;width:90px;top:255.34px">19,644</div>
<div class="c r " style="left:647.80px;width:90px;top:255.34px">22,043</div>
<div class="c r " style="left:743.40px;width:90px;top:255.34px">26,746</div>
<div class="c r " style="left:839.00px;width:90px;top:255.34px">30,825</div>
<div class="c r " style="left:934.60px;width:90px;top:255.34px">34,863</div>
<div class="c r " style="left:1030.20px;width:90px;top:255.34px">40,640</div>
<div class="c r " style="left:1125.80px;width:90px;top:255.34px">46,450</div>
<div class="c r " style="left:1221.40px;width:90px;top:255.34px">52,173</div>
<div class="c r " style="left:1317.00px;width:90px;top:255.34px">61,398</div>
<div class="c i" style="left:95.00px;top:271.10px">Growth from previous period</div>
<div class="c i" style="left:316.20px;top:271.10px">%</div>
<div class="c r i g" style="left:361.00px;width:90px;top:271.10px">19.48%</div>
<div class="c r i" style="left:456.60px;width:90px;top:271.10px">24.82%</div>
<div class="c r i" style="left:552.20px;width:90px;top:271.10px">14.04%</div>
<div class="c r i" style="left:647.80px;width:90px;top:271.10px">12.21%</div>
<div class="c r i" style="left:743.40px;width:90px;top:271.10px">21.33%</div>
<div class="c r i" style="left:839.00px;width:90px;top:271.10px">15.25%</div>
<div class="c r i" style="left:934.60px;width:90px;top:271.10px">13.10%</div>
<div class="c r i" style="left:1030.20px;width:90px;top:271.10px">16.57%</div>
<div class="c r i" style="left:1125.80px;width:90px;top:271.10px">14.30%</div>
<div class="c r i" style="left:1221.40px;width:90px;top:271.10px">12.32%</div>
<div class="c r i" style="left:1317.00px;width:90px;top:271.10px">17.68%</div>
<div class="c b" style="left:79.00px;top:303.42px">Cost of revenue</div>
<div class="c b" style="left:316.20px;top:303.42px">€</div>
<div class="c r g2" style="left:361.00px;width:90px;top:303.42px">17,000</div>
<div class="c r b" style="left:456.60px;width:90px;top:303.42px">15,625</div>
<div class="c r b" style="left:552.20px;width:90px;top:303.42px">15,625</div>
<div class="c r b" style="left:647.80px;width:90px;top:303.42px">15,625</div>
<div class="c r b" style="left:743.40px;width:90px;top:303.42px">26,250</div>
<div class="c r b" style="left:839.00px;width:90px;top:303.42px">26,250</div>
<div class="c r b" style="left:934.60px;width:90px;top:303.42px">26,250</div>
<div class="c r b" style="left:1030.20px;width:90px;top:303.42px">39,375</div>
<div class="c r b" style="left:1125.80px;width:90px;top:303.42px">39,375</div>
<div class="c r b" style="left:1221.40px;width:90px;top:303.42px">39,375</div>
<div class="c r b" style="left:1317.00px;width:90px;top:303.42px">46,875</div>
<div class="c " style="left:87.00px;top:318.38px">Customer support &amp; account management</div>
<div class="c eu" style="left:316.20px;top:318.38px">€</div>
<div class="c r g" style="left:361.00px;width:90px;top:318.38px">5,000</div>
<div class="c r " style="left:456.60px;width:90px;top:318.38px">3,125</div>
<div class="c r " style="left:552.20px;width:90px;top:318.38px">3,125</div>
<div class="c r " style="left:647.80px;width:90px;top:318.38px">3,125</div>
<div class="c r " style="left:743.40px;width:90px;top:318.38px">11,250</div>
<div class="c r " style="left:839.00px;width:90px;top:318.38px">11,250</div>
<div class="c r " style="left:934.60px;width:90px;top:318.38px">11,250</div>
<div class="c r " style="left:1030.20px;width:90px;top:318.38px">21,875</div>
<div class="c r " style="left:1125.80px;width:90px;top:318.38px">21,875</div>
<div class="c r " style="left:1221.40px;width:90px;top:318.38px">21,875</div>
<div class="c r " style="left:1317.00px;width:90px;top:318.38px">26,875</div>
<div class="c " style="left:87.00px;top:334.14px">Hosting &amp; Service Delivery</div>
<div class="c eu" style="left:316.20px;top:334.14px">€</div>
<div class="c r g" style="left:361.00px;width:90px;top:334.14px">10,000</div>
<div class="c r " style="left:456.60px;width:90px;top:334.14px">12,500</div>
<div class="c r " style="left:552.20px;width:90px;top:334.14px">12,500</div>
<div class="c r " style="left:647.80px;width:90px;top:334.14px">12,500</div>
<div class="c r " style="left:743.40px;width:90px;top:334.14px">15,000</div>
<div class="c r " style="left:839.00px;width:90px;top:334.14px">15,000</div>
<div class="c r " style="left:934.60px;width:90px;top:334.14px">15,000</div>
<div class="c r " style="left:1030.20px;width:90px;top:334.14px">17,500</div>
<div class="c r " style="left:1125.80px;width:90px;top:334.14px">17,500</div>
<div class="c r " style="left:1221.40px;width:90px;top:334.14px">17,500</div>
<div class="c r " style="left:1317.00px;width:90px;top:334.14px">20,000</div>
<div class="c " style="left:87.00px;top:349.90px">Other Operations</div>
<div class="c eu" style="left:316.20px;top:349.90px">€</div>
<div class="c r g" style="left:361.00px;width:90px;top:349.90px">2,000</div>
<div class="c r " style="left:456.60px;width:90px;top:349.90px">1,500</div>
<div class="c r " style="left:552.20px;width:90px;top:349.90px">1,500</div>
<div class="c r " style="left:647.80px;width:90px;top:349.90px">1,500</div>
<div class="c r " style="left:743.40px;width:90px;top:349.90px">2,000</div>
<div class="c r " style="left:839.00px;width:90px;top:349.90px">2,000</div>
<div class="c r " style="left:934.60px;width:90px;top:349.90px">2,000</div>
<div class="c r " style="left:1030.20px;width:90px;top:349.90px">2,500</div>
<div class="c r " style="left:1125.80px;width:90px;top:349.90px">2,500</div>
<div class="c r " style="left:1221.40px;width:90px;top:349.90px">2,500</div>
<div class="c r " style="left:1317.00px;width:90px;top:349.90px">3,000</div>
<div class="c b" style="left:79.00px;top:381.82px">Gross profit</div>
<div class="c b" style="left:316.20px;top:381.82px">€</div>
<div class="c r g2" style="left:361.00px;width:90px;top:381.82px">11,000</div>
<div class="c r b" style="left:456.60px;width:90px;top:381.82px">17,434</div>
<div class="c r b" style="left:552.20px;width:90px;top:381.82px">27,690</div>
<div class="c r b" style="left:647.80px;width:90px;top:381.82px">42,043</div>
<div class="c r b" style="left:743.40px;width:90px;top:381.82px">40,079</div>
<div class="c r b" style="left:839.00px;width:90px;top:381.82px">48,116</div>
<div class="c r b" style="left:934.60px;width:90px;top:381.82px">56,113</div>
<div class="c r b" style="left:1030.20px;width:90px;top:381.82px">60,640</div>
<div class="c r b" style="left:1125.80px;width:90px;top:381.82px">74,366</div>
<div class="c r b" style="left:1221.40px;width:90px;top:381.82px">91,965</div>
<div class="c r b" style="left:1317.00px;width:90px;top:381.82px">105,565</div>
<div class="c " style="left:87.00px;top:397.18px">Gross Margin</div>
<div class="c " style="left:316.20px;top:397.18px">%</div>
<div class="c r g" style="left:361.00px;width:90px;top:397.18px">39.3%</div>
<div class="c r " style="left:456.60px;width:90px;top:397.18px">52.7%</div>
<div class="c r " style="left:552.20px;width:90px;top:397.18px">63.9%</div>
<div class="c r " style="left:647.80px;width:90px;top:397.18px">72.9%</div>
<div class="c r " style="left:743.40px;width:90px;top:397.18px">60.4%</div>
<div class="c r " style="left:839.00px;width:90px;top:397.18px">64.7%</div>
<div class="c r " style="left:934.60px;width:90px;top:397.18px">68.1%</div>
<div class="c r " style="left:1030.20px;width:90px;top:397.18px">60.6%</div>
<div class="c r " style="left:1125.80px;width:90px;top:397.18px">65.4%</div>
<div class="c r " style="left:1221.40px;width:90px;top:397.18px">70.0%</div>
<div class="c r " style="left:1317.00px;width:90px;top:397.18px">69.3%</div>
<div class="c b" style="left:79.00px;top:428.70px">Cash Balance</div>
<div class="c r g2" style="left:361.00px;width:90px;top:428.70px">525,000</div>
<div class="c r b" style="left:456.60px;width:90px;top:428.70px">10,383,038</div>
<div class="c r b" style="left:552.20px;width:90px;top:428.70px">10,251,332</div>
<div class="c r b" style="left:647.80px;width:90px;top:428.70px">10,133,979</div>
<div class="c r b" style="left:743.40px;width:90px;top:428.70px">9,917,350</div>
<div class="c r b" style="left:839.00px;width:90px;top:428.70px">9,708,758</div>
<div class="c r b" style="left:934.60px;width:90px;top:428.70px">9,508,163</div>
<div class="c r b" style="left:1030.20px;width:90px;top:428.70px">9,218,845</div>
<div class="c r b" style="left:1125.80px;width:90px;top:428.70px">8,943,253</div>
<div class="c r b" style="left:1221.40px;width:90px;top:428.70px">8,685,259</div>
<div class="c r b" style="left:1317.00px;width:90px;top:428.70px">8,357,862</div>
<div class="c " style="left:87.00px;top:444.46px">Cash beginning of period</div>
<div class="c eu" style="left:316.20px;top:444.46px">€</div>
<div class="c r g" style="left:361.00px;width:90px;top:444.46px">648,000</div>
<div class="c r " style="left:456.60px;width:90px;top:444.46px">525,000</div>
<div class="c r " style="left:552.20px;width:90px;top:444.46px">10,383,038</div>
<div class="c r " style="left:647.80px;width:90px;top:444.46px">10,251,332</div>
<div class="c r " style="left:743.40px;width:90px;top:444.46px">10,133,979</div>
<div class="c r " style="left:839.00px;width:90px;top:444.46px">9,917,350</div>
<div class="c r " style="left:934.60px;width:90px;top:444.46px">9,708,758</div>
<div class="c r " style="left:1030.20px;width:90px;top:444.46px">9,508,163</div>
<div class="c r " style="left:1125.80px;width:90px;top:444.46px">9,218,845</div>
<div class="c r " style="left:1221.40px;width:90px;top:444.46px">8,943,253</div>
<div class="c r " style="left:1317.00px;width:90px;top:444.46px">8,685,259</div>
<div class="c " style="left:87.00px;top:460.22px">Net Burn</div>
<div class="c eu" style="left:316.20px;top:460.22px">€</div>
<div class="c r g" style="left:361.00px;width:90px;top:460.22px">-123,000</div>
<div class="c r g" style="left:456.60px;width:90px;top:460.22px">9,858,038</div>
<div class="c r g" style="left:552.20px;width:90px;top:460.22px">-131,706</div>
<div class="c r g" style="left:647.80px;width:90px;top:460.22px">-117,353</div>
<div class="c r g" style="left:743.40px;width:90px;top:460.22px">-216,629</div>
<div class="c r g" style="left:839.00px;width:90px;top:460.22px">-208,592</div>
<div class="c r g" style="left:934.60px;width:90px;top:460.22px">-200,595</div>
<div class="c r g" style="left:1030.20px;width:90px;top:460.22px">-289,319</div>
<div class="c r g" style="left:1125.80px;width:90px;top:460.22px">-275,592</div>
<div class="c r g" style="left:1221.40px;width:90px;top:460.22px">-257,994</div>
<div class="c r g" style="left:1317.00px;width:90px;top:460.22px">-327,397</div>
<div class="c " style="left:87.00px;top:475.98px">Cash end of period</div>
<div class="c eu" style="left:316.20px;top:475.98px">€</div>
<div class="c r g" style="left:361.00px;width:90px;top:475.98px">525,000</div>
<div class="c r " style="left:456.60px;width:90px;top:475.98px">10,383,038</div>
<div class="c r " style="left:552.20px;width:90px;top:475.98px">10,251,332</div>
<div class="c r " style="left:647.80px;width:90px;top:475.98px">10,133,979</div>
<div class="c r " style="left:743.40px;width:90px;top:475.98px">9,917,350</div>
<div class="c r " style="left:839.00px;width:90px;top:475.98px">9,708,758</div>
<div class="c r " style="left:934.60px;width:90px;top:475.98px">9,508,163</div>
<div class="c r " style="left:1030.20px;width:90px;top:475.98px">9,218,845</div>
<div class="c r " style="left:1125.80px;width:90px;top:475.98px">8,943,253</div>
<div class="c r " style="left:1221.40px;width:90px;top:475.98px">8,685,259</div>
<div class="c r " style="left:1317.00px;width:90px;top:475.98px">8,357,862</div>
<div class="c b w" style="left:79.00px;top:507.50px">Client metrics</div>
<div class="c b" style="left:79.00px;top:523.26px">Enterprise clients</div>
<div class="c b" style="left:316.20px;top:523.26px">#</div>
<div class="c r b g3" style="left:361.00px;width:90px;top:523.26px">4</div>
<div class="c r b g3" style="left:456.60px;width:90px;top:523.26px">6</div>
<div class="c r b g3" style="left:552.20px;width:90px;top:523.26px">9</div>
<div class="c r b g3" style="left:647.80px;width:90px;top:523.26px">10</div>
<div class="c r b g3" style="left:743.40px;width:90px;top:523.26px">11</div>
<div class="c r b g3" style="left:839.00px;width:90px;top:523.26px">12</div>
<div class="c r b g3" style="left:934.60px;width:90px;top:523.26px">15</div>
<div class="c r b g3" style="left:1030.20px;width:90px;top:523.26px">17</div>
<div class="c r b g3" style="left:1125.80px;width:90px;top:523.26px">20</div>
<div class="c r b g3" style="left:1221.40px;width:90px;top:523.26px">23</div>
<div class="c r b g3" style="left:1317.00px;width:90px;top:523.26px">26</div>
<div class="c " style="left:87.00px;top:539.02px">Average revenue per enterprise customer</div>
<div class="c eu" style="left:316.20px;top:539.02px">€</div>
<div class="c r bl" style="left:361.00px;width:90px;top:539.02px">2,500</div>
<div class="c r " style="left:456.60px;width:90px;top:539.02px">2,648</div>
<div class="c r " style="left:552.20px;width:90px;top:539.02px">2,645</div>
<div class="c r " style="left:647.80px;width:90px;top:539.02px">3,517</div>
<div class="c r " style="left:743.40px;width:90px;top:539.02px">3,501</div>
<div class="c r " style="left:839.00px;width:90px;top:539.02px">3,491</div>
<div class="c r " style="left:934.60px;width:90px;top:539.02px">3,196</div>
<div class="c r " style="left:1030.20px;width:90px;top:539.02px">3,445</div>
<div class="c r " style="left:1125.80px;width:90px;top:539.02px">3,433</div>
<div class="c r " style="left:1221.40px;width:90px;top:539.02px">3,416</div>
<div class="c r " style="left:1317.00px;width:90px;top:539.02px">3,409</div>
<div class="c " style="left:87.00px;top:554.78px">CLT</div>
<div class="c " style="left:316.20px;top:554.78px">years</div>
<div class="c r bl" style="left:361.00px;width:90px;top:554.78px">15.0</div>
<div class="c r " style="left:456.60px;width:90px;top:554.78px">16.7</div>
<div class="c r " style="left:552.20px;width:90px;top:554.78px">16.7</div>
<div class="c r " style="left:647.80px;width:90px;top:554.78px">16.7</div>
<div class="c r " style="left:743.40px;width:90px;top:554.78px">16.7</div>
<div class="c r " style="left:839.00px;width:90px;top:554.78px">16.7</div>
<div class="c r " style="left:934.60px;width:90px;top:554.78px">16.7</div>
<div class="c r " style="left:1030.20px;width:90px;top:554.78px">16.7</div>
<div class="c r " style="left:1125.80px;width:90px;top:554.78px">16.7</div>
<div class="c r " style="left:1221.40px;width:90px;top:554.78px">16.7</div>
<div class="c r " style="left:1317.00px;width:90px;top:554.78px">16.7</div>
<div class="c " style="left:87.00px;top:570.54px">CLTV</div>
<div class="c eu" style="left:316.20px;top:570.54px">€</div>
<div class="c r g" style="left:361.00px;width:90px;top:570.54px">450,000</div>
<div class="c r " style="left:456.60px;width:90px;top:570.54px">529,543</div>
<div class="c r " style="left:552.20px;width:90px;top:570.54px">528,951</div>
<div class="c r " style="left:647.80px;width:90px;top:570.54px">703,332</div>
<div class="c r " style="left:743.40px;width:90px;top:570.54px">700,299</div>
<div class="c r " style="left:839.00px;width:90px;top:570.54px">698,165</div>
<div class="c r " style="left:934.60px;width:90px;top:570.54px">639,265</div>
<div class="c r " style="left:1030.20px;width:90px;top:570.54px">688,945</div>
<div class="c r " style="left:1125.80px;width:90px;top:570.54px">686,638</div>
<div class="c r " style="left:1221.40px;width:90px;top:570.54px">683,139</div>
<div class="c r " style="left:1317.00px;width:90px;top:570.54px">681,035</div>
<div class="c b" style="left:79.00px;top:602.06px">SME clients</div>
<div class="c b" style="left:316.20px;top:602.06px">#</div>
<div class="c r b g3" style="left:361.00px;width:90px;top:602.06px">23</div>
<div class="c r b g3" style="left:456.60px;width:90px;top:602.06px">27</div>
<div class="c r b g3" style="left:552.20px;width:90px;top:602.06px">30</div>
<div class="c r b g3" style="left:647.80px;width:90px;top:602.06px">34</div>
<div class="c r b g3" style="left:743.40px;width:90px;top:602.06px">40</div>
<div class="c r b g3" style="left:839.00px;width:90px;top:602.06px">46</div>
<div class="c r b g3" style="left:934.60px;width:90px;top:602.06px">52</div>
<div class="c r b g3" style="left:1030.20px;width:90px;top:602.06px">61</div>
<div class="c r b g3" style="left:1125.80px;width:90px;top:602.06px">70</div>
<div class="c r b g3" style="left:1221.40px;width:90px;top:602.06px">78</div>
<div class="c r b g3" style="left:1317.00px;width:90px;top:602.06px">89</div>
<div class="c " style="left:87.00px;top:617.82px">Average revenue per SME customer</div>
<div class="c eu" style="left:316.20px;top:617.82px">€</div>
<div class="c r bl" style="left:361.00px;width:90px;top:617.82px">600</div>
<div class="c r " style="left:456.60px;width:90px;top:617.82px">646</div>
<div class="c r " style="left:552.20px;width:90px;top:617.82px">646</div>
<div class="c r " style="left:647.80px;width:90px;top:617.82px">646</div>
<div class="c r " style="left:743.40px;width:90px;top:617.82px">667</div>
<div class="c r " style="left:839.00px;width:90px;top:617.82px">667</div>
<div class="c r " style="left:934.60px;width:90px;top:617.82px">667</div>
<div class="c r " style="left:1030.20px;width:90px;top:617.82px">667</div>
<div class="c r " style="left:1125.80px;width:90px;top:617.82px">667</div>
<div class="c r " style="left:1221.40px;width:90px;top:617.82px">667</div>
<div class="c r " style="left:1317.00px;width:90px;top:617.82px">688</div>
<div class="c " style="left:87.00px;top:633.58px">CLT</div>
<div class="c " style="left:316.20px;top:633.58px">years</div>
<div class="c r bl" style="left:361.00px;width:90px;top:633.58px">3.5</div>
<div class="c r " style="left:456.60px;width:90px;top:633.58px">4.2</div>
<div class="c r " style="left:552.20px;width:90px;top:633.58px">4.2</div>
<div class="c r " style="left:647.80px;width:90px;top:633.58px">4.2</div>
<div class="c r " style="left:743.40px;width:90px;top:633.58px">4.2</div>
<div class="c r " style="left:839.00px;width:90px;top:633.58px">4.2</div>
<div class="c r " style="left:934.60px;width:90px;top:633.58px">4.2</div>
<div class="c r " style="left:1030.20px;width:90px;top:633.58px">4.2</div>
<div class="c r " style="left:1125.80px;width:90px;top:633.58px">4.2</div>
<div class="c r " style="left:1221.40px;width:90px;top:633.58px">4.2</div>
<div class="c r " style="left:1317.00px;width:90px;top:633.58px">4.2</div>
<div class="c " style="left:87.00px;top:649.34px">CLTV</div>
<div class="c eu" style="left:316.20px;top:649.34px">€</div>
<div class="c r g" style="left:361.00px;width:90px;top:649.34px">25,200</div>
<div class="c r " style="left:456.60px;width:90px;top:649.34px">32,292</div>
<div class="c r " style="left:552.20px;width:90px;top:649.34px">32,292</div>
<div class="c r " style="left:647.80px;width:90px;top:649.34px">32,292</div>
<div class="c r " style="left:743.40px;width:90px;top:649.34px">33,333</div>
<div class="c r " style="left:839.00px;width:90px;top:649.34px">33,333</div>
<div class="c r " style="left:934.60px;width:90px;top:649.34px">33,333</div>
<div class="c r " style="left:1030.20px;width:90px;top:649.34px">33,333</div>
<div class="c r " style="left:1125.80px;width:90px;top:649.34px">33,333</div>
<div class="c r " style="left:1221.40px;width:90px;top:649.34px">33,333</div>
<div class="c r " style="left:1317.00px;width:90px;top:649.34px">34,375</div>
<div class="c b w" style="left:79.00px;top:680.86px">Client acquisition metrics</div>
<div class="c b" style="left:79.00px;top:696.62px">CAC SME (marketing)</div>
<div class="c b" style="left:316.20px;top:696.62px">€/client</div>
<div class="c r g2" style="left:361.00px;width:90px;top:696.62px">5,167</div>
<div class="c r b" style="left:456.60px;width:90px;top:696.62px">1,967</div>
<div class="c r b" style="left:552.20px;width:90px;top:696.62px">1,899</div>
<div class="c r b" style="left:647.80px;width:90px;top:696.62px">1,879</div>
<div class="c r b" style="left:743.40px;width:90px;top:696.62px">2,661</div>
<div class="c r b" style="left:839.00px;width:90px;top:696.62px">2,565</div>
<div class="c r b" style="left:934.60px;width:90px;top:696.62px">2,542</div>
<div class="c r b" style="left:1030.20px;width:90px;top:696.62px">3,025</div>
<div class="c r b" style="left:1125.80px;width:90px;top:696.62px">2,957</div>
<div class="c r b" style="left:1221.40px;width:90px;top:696.62px">2,944</div>
<div class="c r b" style="left:1317.00px;width:90px;top:696.62px">2,843</div>
<div class="c " style="left:87.00px;top:712.38px">SME customer acquisition costs</div>
<div class="c eu" style="left:316.20px;top:712.38px">€</div>
<div class="c r bl" style="left:361.00px;width:90px;top:712.38px">10,333</div>
<div class="c r " style="left:456.60px;width:90px;top:712.38px">8,125</div>
<div class="c r " style="left:552.20px;width:90px;top:712.38px">8,125</div>
<div class="c r " style="left:647.80px;width:90px;top:712.38px">8,125</div>
<div class="c r " style="left:743.40px;width:90px;top:712.38px">17,750</div>
<div class="c r " style="left:839.00px;width:90px;top:712.38px">17,750</div>
<div class="c r " style="left:934.60px;width:90px;top:712.38px">17,750</div>
<div class="c r " style="left:1030.20px;width:90px;top:712.38px">29,375</div>
<div class="c r " style="left:1125.80px;width:90px;top:712.38px">29,375</div>
<div class="c r " style="left:1221.40px;width:90px;top:712.38px">29,375</div>
<div class="c r " style="left:1317.00px;width:90px;top:712.38px">35,875</div>
<div style="left:835px;top:268px;width:93px;height:13px;border:2px solid #2268e6"></div>
<div style="left:927.500px;top:280.800px;width:5px;height:5px;background:#2268e6;border:.500px solid #fff"></div>
<!-- bottom -->
<div style="left:0;top:731.4px;width:1400px;height:41.60000000000002px;background:#f8f9fa"></div>
<div style="left:0;top:731.4px;width:1400px;height:1px;background:#e0e0e0"></div>
<div style="left:358.200px;top:732.4px;width:1042px;height:9px;background:#fdfdfd"></div>
<div style="left:572px;top:733px;width:210px;height:7px;border-radius:4px;background:#d8d8d8;box-shadow:inset 0 0 0 .500px #cbcbcb"></div>
<div style="left:354.900px;top:731.400px;width:3.300px;height:10px;background:#dbdcdf"></div>
<div style="left:0;top:741px;width:1400px;height:28px;background:#ededed"></div>
<div style="left:0;top:769px;width:1400px;height:2.500px;background:#f4f4f4"></div>
<div style="left:295px;top:741px;width:101px;height:28px;background:#fbfbfb;box-shadow:0 0 2px rgba(0,0,0,.22)"></div>
<svg style="left:29.5px;top:749.0px" width="14" height="14" viewBox="0 0 24 24"><path fill="#444746" d="M19 13h-6v6h-2v-6H5v-2h6V5h2v6h6v2z" /></svg>
<svg style="left:56.500px;top:751.500px" width="9.500" height="9.500" viewBox="0 0 11 11"><path fill="#444746" d="M0 0h11v1.700H0zM0 3.100h11v1.700H0zM0 6.200h11v1.700H0zM0 9.300h11V11H0z"/></svg>
<div class="tab" style="left:97px;color:#54575b;letter-spacing:0.3px">Cover</div>
<svg style="left:131.5px;top:749.5px" width="14" height="14" viewBox="0 0 24 24"><path fill="#77797c" d="M7 10l5 5 5-5z" /></svg>
<div class="tab" style="left:169px;color:#54575b;letter-spacing:0.3px">0_How to read me</div>
<svg style="left:269.5px;top:749.5px" width="14" height="14" viewBox="0 0 24 24"><path fill="#77797c" d="M7 10l5 5 5-5z" /></svg>
<div class="tab" style="left:307px;color:#188038;letter-spacing:0.25px">1_Overview</div>
<svg style="left:371.0px;top:749.5px" width="14" height="14" viewBox="0 0 24 24"><path fill="#188038" d="M7 10l5 5 5-5z" /></svg>
<div class="tab" style="left:409px;color:#54575b;letter-spacing:0.18px">2_Financial_Statements</div>
<svg style="left:539.0px;top:749.5px" width="14" height="14" viewBox="0 0 24 24"><path fill="#77797c" d="M7 10l5 5 5-5z" /></svg>
<div class="tab" style="left:576px;color:#54575b;letter-spacing:0.3px">3_Assumptions</div>
<svg style="left:660.0px;top:749.5px" width="14" height="14" viewBox="0 0 24 24"><path fill="#77797c" d="M7 10l5 5 5-5z" /></svg>
<div class="tab" style="left:697.5px;color:#54575b;letter-spacing:0.03px">4.1_Calcs_Team&amp;overhead</div>
<svg style="left:841.5px;top:749.5px" width="14" height="14" viewBox="0 0 24 24"><path fill="#77797c" d="M7 10l5 5 5-5z" /></svg>
<div class="tab" style="left:878px;color:#54575b;letter-spacing:0.2px">4.2_Calcs_Commercial</div>
<svg style="left:1003.0px;top:749.5px" width="14" height="14" viewBox="0 0 24 24"><path fill="#77797c" d="M7 10l5 5 5-5z" /></svg>
<div class="tab" style="left:1040px;width:61.500px;overflow:hidden;letter-spacing:.1px;color:#54575b">Raw data in</div>
<div style="left:84px;top:741px;width:1px;height:28px;background:#f6f6f6"></div>
<div style="left:156px;top:741px;width:1px;height:28px;background:#f6f6f6"></div>
<div style="left:563px;top:741px;width:1px;height:28px;background:#f6f6f6"></div>
<div style="left:684px;top:741px;width:1px;height:28px;background:#f6f6f6"></div>
<div style="left:865px;top:741px;width:1px;height:28px;background:#f6f6f6"></div>
<div style="left:1027px;top:741px;width:1px;height:28px;background:#f6f6f6"></div>
<div style="left:85px;top:769px;width:71px;height:2.500px;background:#12301a"></div>
<div style="left:156px;top:769px;width:139px;height:2.500px;background:#1f7d2c"></div>
<div style="left:295px;top:769px;width:101px;height:2.500px;background:#3f9c42"></div>
<div style="left:396px;top:769px;width:167px;height:2.500px;background:#3f9c42"></div>
<div style="left:563px;top:769px;width:121px;height:2.500px;background:#3f9c42"></div>
<div style="left:684px;top:769px;width:181px;height:2.500px;background:#a3d39c"></div>
<div style="left:865px;top:769px;width:162px;height:2.500px;background:#a3d39c"></div>
<div style="left:1027px;top:769px;width:75px;height:2.500px;background:#2c6355"></div>
<div style="left:1102px;top:741px;width:298px;height:28px;background:#ededed"></div>
<div style="left:1097px;top:741px;width:5px;height:30.500px;background:linear-gradient(90deg,rgba(0,0,0,0),rgba(0,0,0,.22))"></div>
<svg style="left:1108.5px;top:747px" width="18" height="18" viewBox="0 0 24 24"><path fill="#c4c7ca" d="M14 7l-5 5 5 5z" /></svg>
<svg style="left:1133.5px;top:747px" width="18" height="18" viewBox="0 0 24 24"><path fill="#444746" d="M10 17l5-5-5-5z" /></svg>
<div style="left:1283px;top:742.500px;width:82px;height:28px;background:#f5f5f5;border:1px solid #dedede;border-bottom:none;border-radius:2px 2px 0 0"></div>
<svg style="left:1292px;top:748.500px" width="15" height="17" viewBox="0 0 15 17"><path fill="#1e8e3e" d="M1.500 0h12A1.500 1.500 0 0 1 15 1.500v11a1.500 1.500 0 0 1-1.500 1.500H10l-2.500 3L5 14H1.500A1.500 1.500 0 0 1 0 12.500v-11A1.500 1.500 0 0 1 1.500 0z"/><path fill="#fff" d="M7.500 2.500l1.300 3.200 3.200 1.300-3.200 1.300-1.300 3.200-1.300-3.200L3 7l3.200-1.300z"/></svg>
<div class="t" style="left:1318px;top:750px;font-size:9.600px;line-height:14px;color:#188038;-webkit-text-stroke:.25px #188038">Explore</div>
<svg style="left:1381.0px;top:749.0px" width="14" height="14" viewBox="0 0 24 24"><path fill="#444746" d="M15.41 7.41L14 6l-6 6 6 6 1.41-1.41L10.83 12z" /></svg>
<svg style="left:1379.5px;top:732.5px" width="8.5" height="8.5" viewBox="0 0 24 24"><path fill="#80868b" d="M14 7l-5 5 5 5z" /></svg>
<svg style="left:1392px;top:732.5px" width="8.5" height="8.5" viewBox="0 0 24 24"><path fill="#80868b" d="M10 17l5-5-5-5z" /></svg>
<div style="left:1377px;top:731.400px;width:1px;height:10.600px;background:#e0e0e0"></div>
<div style="left:1389px;top:731.400px;width:1px;height:10.600px;background:#e0e0e0"></div>
<div style="left:0;top:771.400px;width:1400px;height:2px;background:#151515"></div>
</div>
</body>
</html>
